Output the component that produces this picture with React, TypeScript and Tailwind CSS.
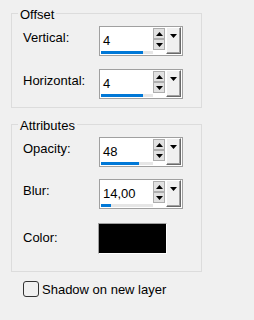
import React from "react";

function Spin({ value, bar }: { value: string; bar: number }) {
  return (
    <div className="w-[84px] h-[30px] border border-[#a0a0a0] bg-white flex">
      <div className="w-[53px] pl-[1px] flex flex-col">
        <div className="flex-1 pl-[2px] pt-[6px] leading-[15px] text-black">{value}</div>
        <div className="h-[3px] mb-[1px] bg-[#e6e6e6]">
          <div className="h-full bg-[#0078d7]" style={{ width: bar }} />
        </div>
      </div>
      <div className="w-[12px] pt-[1px] flex flex-col">
        <div className="h-[11px] border border-[#adadad] bg-[#e1e1e1] flex items-center justify-center">
          <svg width="7" height="4" viewBox="0 0 7 4">
            <path d="M0 4 L3.5 0 L7 4 Z" fill="#000" />
          </svg>
        </div>
        <div className="h-[11px] border border-[#adadad] bg-[#e1e1e1] flex items-center justify-center">
          <svg width="7" height="4" viewBox="0 0 7 4">
            <path d="M0 0 L7 0 L3.5 4 Z" fill="#000" />
          </svg>
        </div>
      </div>
      <div className="ml-[1px] w-[15px] h-[27px] bg-[#f0f0f0] border border-t-white border-l-white border-r-[#696969] border-b-[#696969] shadow-[inset_-1px_-1px_0_#a0a0a0] flex justify-center pt-[6px]">
        <svg width="7" height="4" viewBox="0 0 7 4">
          <path d="M0 0 L7 0 L3.5 4 Z" fill="#000" />
        </svg>
      </div>
    </div>
  );
}

function Row({ label, children }: { label: string; children: React.ReactNode }) {
  return (
    <div className="flex items-start">
      <div className="w-[76px] pt-[4px] leading-[15px] text-black">{label}</div>
      {children}
    </div>
  );
}

export default function App() {
  return (
    <div className="w-[254px] h-[320px] bg-[#f0f0f0] pt-[4px] pl-[11px] font-['Liberation_Sans',Arial,sans-serif] text-[13px] text-black">
      <fieldset className="w-[191px] border border-[#dcdcdc]">
        <legend className="ml-[6px] px-[2px] pt-[3px] leading-[15px]">Offset</legend>
        <div className="pl-[11px] pt-[4px] pb-[8px] flex flex-col gap-[13px]">
          <Row label="Vertical:">
            <Spin value="4" bar={42} />
          </Row>
          <Row label="Horizontal:">
            <Spin value="4" bar={42} />
          </Row>
        </div>
      </fieldset>

      <fieldset className="mt-[7px] w-[191px] border border-[#dcdcdc]">
        <legend className="ml-[6px] px-[2px] pt-[3px] leading-[15px]">Attributes</legend>
        <div className="pl-[11px] pt-[4px] pb-[17px] flex flex-col">
          <Row label="Opacity:">
            <Spin value="48" bar={38} />
          </Row>
          <div className="mt-[12px]">
            <Row label="Blur:">
              <Spin value="14,00" bar={10} />
            </Row>
          </div>
          <div className="mt-[14px] flex items-start">
            <div className="w-[75px] pt-[7px] leading-[15px]">Color:</div>
            <div className="w-[69px] h-[31px] bg-black border border-t-[#a0a0a0] border-l-[#a0a0a0] border-r-white border-b-white" />
          </div>
        </div>
      </fieldset>

      <label className="mt-[9px] ml-[12px] flex items-center gap-[3px] leading-[15px]">
        <span className="w-[16px] h-[16px] rounded-[3px] border border-[#333333]" />
        <span>Shadow on new layer</span>
      </label>
    </div>
  );
}
